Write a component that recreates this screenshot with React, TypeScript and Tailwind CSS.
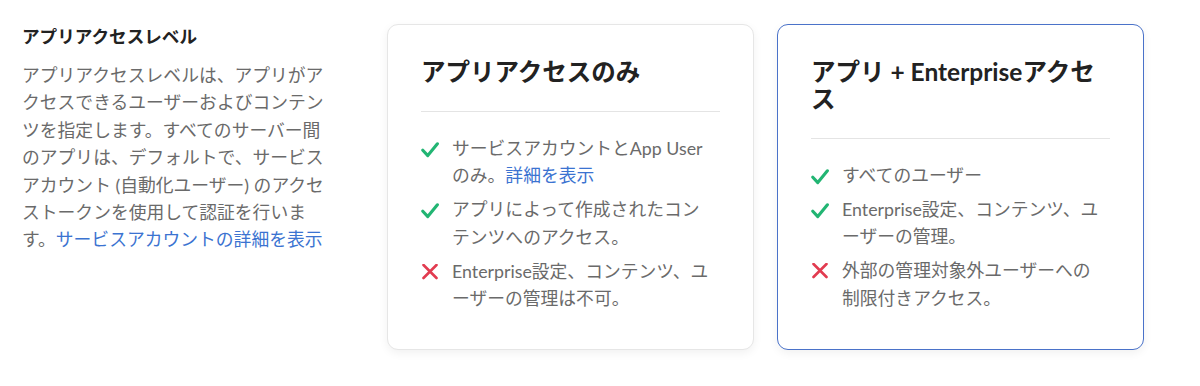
import React from "react";

const Check = () => (
  <svg width="18" height="16" viewBox="0 0 18 16" className="shrink-0 mt-[7px]">
    <path d="M1.8 8.2 L6.8 13.6 L16.4 1.8" fill="none" stroke="#22b573" strokeWidth="3.1" strokeLinecap="round" strokeLinejoin="round" />
  </svg>
);

const Cross = () => (
  <svg width="18" height="16" viewBox="0 0 18 16" className="shrink-0 mt-[6px]">
    <path d="M2.5 1 L15.5 14 M15.5 1 L2.5 14" fill="none" stroke="#e23b50" strokeWidth="2.6" strokeLinecap="round" />
  </svg>
);

type ItemData = { ok: boolean; text: React.ReactNode };

const Item = ({ ok, text }: ItemData) => (
  <li className="flex gap-[13px]">
    <div className="w-[18px] flex justify-center">{ok ? <Check /> : <Cross />}</div>
    <div className="flex-1 pr-[5px] text-[#6a6a6a]">{text}</div>
  </li>
);

const Card = ({ title, items, active }: { title: string; items: ItemData[]; active?: boolean }) => (
  <div
    className={
      "w-[367px] h-[326px] rounded-[11px] bg-white px-[33px] pt-[33px] " +
      (active
        ? "border border-[#4a72c9] shadow-[0_3px_10px_rgba(0,0,0,0.06)]"
        : "border border-[#e6e6e6] shadow-[0_3px_10px_rgba(0,0,0,0.06)]")
    }
  >
    <h2 className="text-[24.5px] leading-[27px] font-bold text-[#222]">{title}</h2>
    <div className="h-px bg-[#e4e4e4] mt-[26px] mb-[23px]" />
    <ul className="flex flex-col gap-[6.5px] text-[17.8px] leading-[27.4px]">
      {items.map((it, i) => (
        <Item key={i} {...it} />
      ))}
    </ul>
  </div>
);

export default function App() {
  return (
    <div className="w-[1200px] h-[386px] bg-white flex pl-[22px] pt-[24px] font-['Lato','Noto_Sans_CJK_JP',sans-serif]">
      <div className="w-[310px] shrink-0">
        <h1 className="text-[17.6px] leading-[26px] font-bold text-[#222]">アプリアクセスレベル</h1>
        <p className="mt-[12px] text-[17.8px] leading-[27.4px] text-[#6a6a6a]">
          アプリアクセスレベルは、アプリがアクセスできるユーザーおよびコンテンツを指定します。すべてのサーバー間のアプリは、デフォルトで、サービスアカウント (自動化ユーザー) のアクセストークンを使用して認証を行います。
          <a className="text-[#3b73d1]">サービスアカウントの詳細を表示</a>
        </p>
      </div>
      <div className="ml-[55px] flex gap-[23px]">
        <Card
          title="アプリアクセスのみ"
          items={[
            {
              ok: true,
              text: (
                <>
                  サービスアカウントとApp Userのみ。<a className="text-[#3b73d1]">詳細を表示</a>
                </>
              ),
            },
            { ok: true, text: "アプリによって作成されたコンテンツへのアクセス。" },
            { ok: false, text: "Enterprise設定、コンテンツ、ユーザーの管理は不可。" },
          ]}
        />
        <Card
          active
          title="アプリ + Enterpriseアクセス"
          items={[
            { ok: true, text: "すべてのユーザー" },
            { ok: true, text: "Enterprise設定、コンテンツ、ユーザーの管理。" },
            { ok: false, text: "外部の管理対象外ユーザーへの制限付きアクセス。" },
          ]}
        />
      </div>
    </div>
  );
}
